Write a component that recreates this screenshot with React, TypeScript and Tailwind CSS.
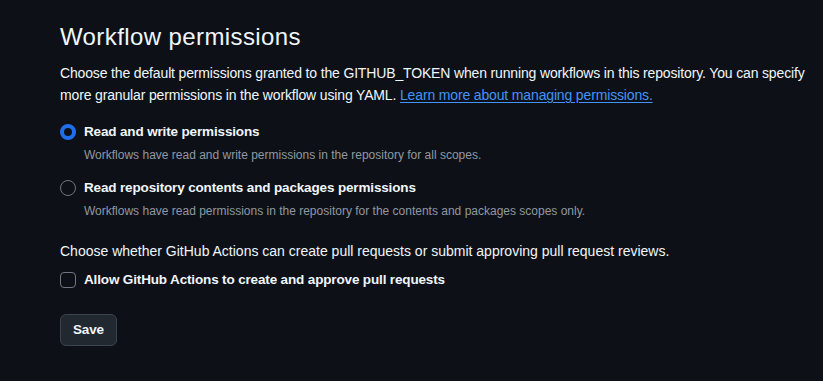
export default function App() {
  const font = { fontFamily: '"Segoe UI", "Liberation Sans", Arial, sans-serif' };
  const bold = "text-[13.5px] leading-[21px] font-bold tracking-[-0.15px]";
  return (
    <div className="min-h-[381px] w-full bg-[#0d1117] text-[#f0f6fc]" style={font}>
      <div className="pl-[60px] pr-[12px] pt-[19px]">
        <h2 className="text-[24px] leading-[36px] font-normal tracking-[0.4px]">Workflow permissions</h2>
        <p className="mt-[7px] text-[14px] leading-[22px] tracking-[-0.15px]">
          Choose the default permissions granted to the GITHUB_TOKEN when running workflows in this repository. You can specify more granular permissions in the workflow using YAML.{" "}
          <a href="#" className="text-[#4493f8] underline underline-offset-2">Learn more about managing permissions.</a>
        </p>

        <div className="mt-[15px]">
          <label className="flex items-center gap-[8px]">
            <span className="w-[16px] h-[16px] rounded-full border-[4px] border-[#1f6feb] bg-[#0d1117] shrink-0"></span>
            <span className={bold}>Read and write permissions</span>
          </label>
          <p className="mt-[4px] pl-[24px] text-[12px] leading-[18px] text-[#9198a1]">
            Workflows have read and write permissions in the repository for all scopes.
          </p>
        </div>

        <div className="mt-[13px]">
          <label className="flex items-center gap-[8px]">
            <span className="w-[16px] h-[16px] rounded-full border border-[#6e7681] shrink-0"></span>
            <span className={bold}>Read repository contents and packages permissions</span>
          </label>
          <p className="mt-[4px] pl-[24px] text-[12px] leading-[18px] text-[#9198a1]">
            Workflows have read permissions in the repository for the contents and packages scopes only.
          </p>
        </div>

        <p className="mt-[21px] text-[14px] leading-[21px]">
          Choose whether GitHub Actions can create pull requests or submit approving pull request reviews.
        </p>
        <label className="mt-[7px] flex items-center gap-[8px]">
          <span className="w-[16px] h-[16px] rounded-[4px] border border-[#6e7681] shrink-0"></span>
          <span className={bold}>Allow GitHub Actions to create and approve pull requests</span>
        </label>

        <button className="mt-[24px] h-[32px] px-[12px] rounded-[6px] border border-[#3d444d] bg-[#212830] text-[13.5px] font-bold tracking-[-0.15px] text-[#f0f6fc]">
          Save
        </button>
      </div>
    </div>
  );
}
